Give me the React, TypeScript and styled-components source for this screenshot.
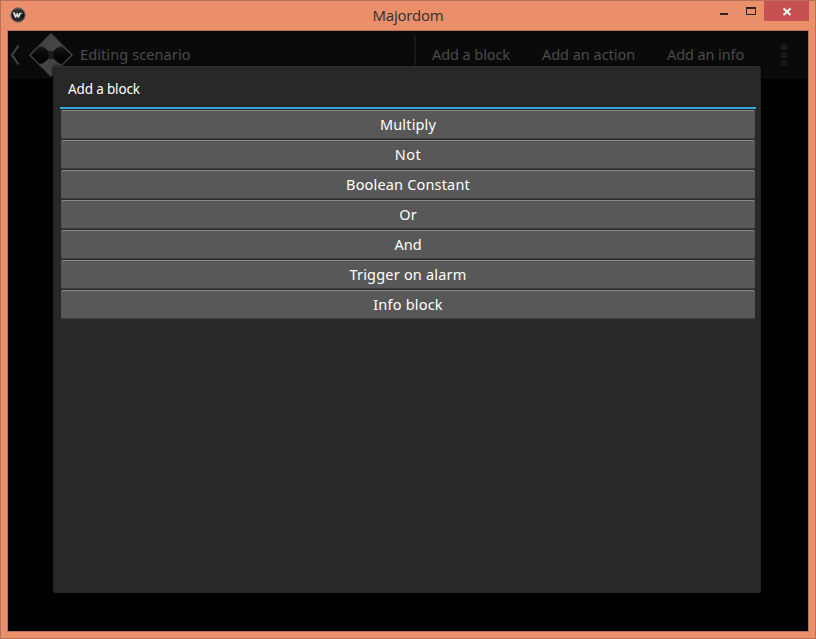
import React from "react";
import styled, { createGlobalStyle } from "styled-components";

const GlobalStyle = createGlobalStyle`
  * { box-sizing: border-box; }
  html, body { margin: 0; padding: 0; overflow: hidden; }
`;

const Window = styled.div`
  width: 816px;
  height: 639px;
  display: flex;
  flex-direction: column;
  padding: 0 6px 6px;
  border: 1px solid #b7705a;
  background: #ea8f69;
  font-family: "Noto Sans", "Open Sans", sans-serif;
`;

const TitleBar = styled.header`
  height: 29px;
  flex: none;
  display: grid;
  grid-template-columns: 96px 1fr 96px;
  align-items: start;
`;

const AppIcon = styled.svg`
  width: 16px;
  height: 16px;
  margin: 6px 0 0 3px;
`;

const WindowTitle = styled.div`
  text-align: center;
  font: 15px/20px "Open Sans", sans-serif;
  letter-spacing: -0.25px;
  padding-top: 4px;
  color: #30302f;
`;

const WindowControls = styled.div`
  display: flex;
  justify-content: flex-end;
  align-items: flex-start;
`;

const ControlIcon = styled.svg<{ $width: number }>`
  display: block;
  flex: none;
  width: ${(p) => p.$width}px;
  height: 20px;
`;

const CloseButton = styled.div`
  flex: none;
  width: 45px;
  height: 20px;
  background: #c75050;
`;

const Client = styled.main`
  position: relative;
  flex: 1;
  border: 1px solid #b7705a;
  background: #000;
`;

const ActionBar = styled.nav`
  height: 48px;
  display: flex;
  align-items: center;
  background: #0a0a0a;
`;

const BackIcon = styled.svg`
  width: 20px;
  height: 48px;
  flex: none;
`;

const Logo = styled.svg`
  width: 46px;
  height: 48px;
  flex: none;
`;

const BarText = styled.span<{ $width: number; $spacing: number }>`
  display: block;
  width: ${(p) => p.$width}px;
  padding-bottom: 2px;
  white-space: nowrap;
  font-size: 14.5px;
  line-height: 20px;
  letter-spacing: ${(p) => p.$spacing}px;
  color: #4b4b4b;
`;

const BarTitle = styled.div`
  flex: 1;
  padding-left: 6px;
`;

const Separator = styled.div`
  width: 2px;
  height: 40px;
  background: #191919;
`;

const Actions = styled.div`
  display: flex;
  gap: 31px;
  padding-left: 16px;
  width: 345px;
`;

const MoreDots = styled.div`
  width: 46px;
  margin-right: 1px;
  display: flex;
  flex-direction: column;
  align-items: center;
  gap: 2px;
`;

const Dot = styled.i`
  width: 6px;
  height: 6px;
  background: #191919;
`;

const Modal = styled.section`
  position: absolute;
  left: 45px;
  top: 35px;
  width: 708px;
  height: 527px;
  padding: 0 4px 0 6px;
  border: 1px solid #222;
  border-top-color: #303030;
  border-radius: 2px;
  background: #282828;
  box-shadow: 0 0 3px #000;
`;

const ModalTitle = styled.h1`
  height: 42px;
  margin: 0;
  padding: 12px 8px 0;
  border-bottom: 2px solid #33a5d6;
  font-size: 13.5px;
  line-height: 20px;
  font-weight: 400;
  letter-spacing: -0.15px;
  color: #fff;
`;

const BlockList = styled.div`
  display: flex;
  flex-direction: column;
  gap: 1px;
  padding: 1px 1px 0;
`;

const BlockButton = styled.button<{ $spacing: number }>`
  height: 29px;
  padding: 0;
  border: 0;
  border-top: 1px solid #888;
  border-bottom: 1px solid #3f3f3f;
  border-radius: 2px;
  background: #585858;
  color: #fff;
  font: 14.5px/25px "Noto Sans", sans-serif;
  letter-spacing: ${(p) => p.$spacing}px;
`;

const actions = [
  { text: "Add a block", width: 79, spacing: -0.08 },
  { text: "Add an action", width: 94, spacing: -0.03 },
  { text: "Add an info", width: 80, spacing: -0.1 },
];

const blocks = [
  { text: "Multiply", spacing: 0.15 },
  { text: "Not", spacing: 0.5 },
  { text: "Boolean Constant", spacing: 0.17 },
  { text: "Or", spacing: 0.1 },
  { text: "And", spacing: 0 },
  { text: "Trigger on alarm", spacing: 0.2 },
  { text: "Info block", spacing: 0.2 },
];

export default function App() {
  return (
    <>
      <GlobalStyle />
      <Window>
        <TitleBar>
          <AppIcon viewBox="0 0 16 16">
            <defs>
              <linearGradient id="orb" x1="0" y1="0" x2="0" y2="1">
                <stop offset="0" stopColor="#444" />
                <stop offset=".5" stopColor="#151515" />
                <stop offset="1" stopColor="#383838" />
              </linearGradient>
            </defs>
            <circle cx="8" cy="8" r="7.2" fill="url(#orb)" stroke="#756c66" strokeWidth="1" />
            <path d="M2.8 5.8 4.7 5 6 8.3 6.7 5.8 8 6 8.6 8 9.3 6 12.8 5.8 10.6 7.6 9 10.8H7.8L7 9 6.2 10.8H5Z" fill="#ddd" />
          </AppIcon>
          <WindowTitle>Majordom</WindowTitle>
          <WindowControls>
            <ControlIcon $width={24} viewBox="0 0 24 20">
              <path d="M1 12h8v2H1z" fill="#2a2523" />
            </ControlIcon>
            <ControlIcon $width={21} viewBox="0 0 21 20">
              <path d="M3 6h10v8H3zM4 8v5h8V8z" fill="#2a2523" fillRule="evenodd" />
            </ControlIcon>
            <CloseButton>
              <ControlIcon $width={45} viewBox="0 0 45 20">
                <path d="m19.5 7.5 7 6.5m0-6.5-7 6.500" stroke="#fff" strokeWidth="1.9" />
              </ControlIcon>
            </CloseButton>
          </WindowControls>
        </TitleBar>
        <Client>
          <ActionBar>
            <BackIcon viewBox="0 0 20 48">
              <path d="m10.5 14.5-6.5 9.5 6.5 9.5" fill="none" stroke="#414141" strokeWidth="2.2" />
            </BackIcon>
            <Logo viewBox="0 0 46 48">
              <defs>
                <linearGradient id="tie" x1="0" y1="0" x2="0" y2="1">
                  <stop offset="0" stopColor="#1a1a1a" />
                  <stop offset=".5" stopColor="#060606" />
                  <stop offset="1" stopColor="#000" />
                </linearGradient>
              </defs>
              <path d="M23 2 45 24 23 46 1 24Z" fill="#444" />
              <path d="M11.5 15.5 2.8 24l9 9C15 33 18 30 20.5 27.500h5C28 30 31 33 34.200 33l9-9-8.700-8.500C31 15 28 17 25.500 20.500h-5C18 17 15 15 11.500 15.500Z" fill="url(#tie)" />
              <path d="M20.5 20h5v8h-5z" fill="#1d1d1d" />
            </Logo>
            <BarTitle>
              <BarText $width={120} $spacing={0.1}>Editing scenario</BarText>
            </BarTitle>
            <Separator />
            <Actions>
              {actions.map((a) => (
                <BarText key={a.text} $width={a.width} $spacing={a.spacing}>{a.text}</BarText>
              ))}
            </Actions>
            <MoreDots>
              <Dot />
              <Dot />
              <Dot />
            </MoreDots>
          </ActionBar>
          <Modal>
            <ModalTitle>Add a block</ModalTitle>
            <BlockList>
              {blocks.map((b) => (
                <BlockButton key={b.text} $spacing={b.spacing}>{b.text}</BlockButton>
              ))}
            </BlockList>
          </Modal>
        </Client>
      </Window>
    </>
  );
}
